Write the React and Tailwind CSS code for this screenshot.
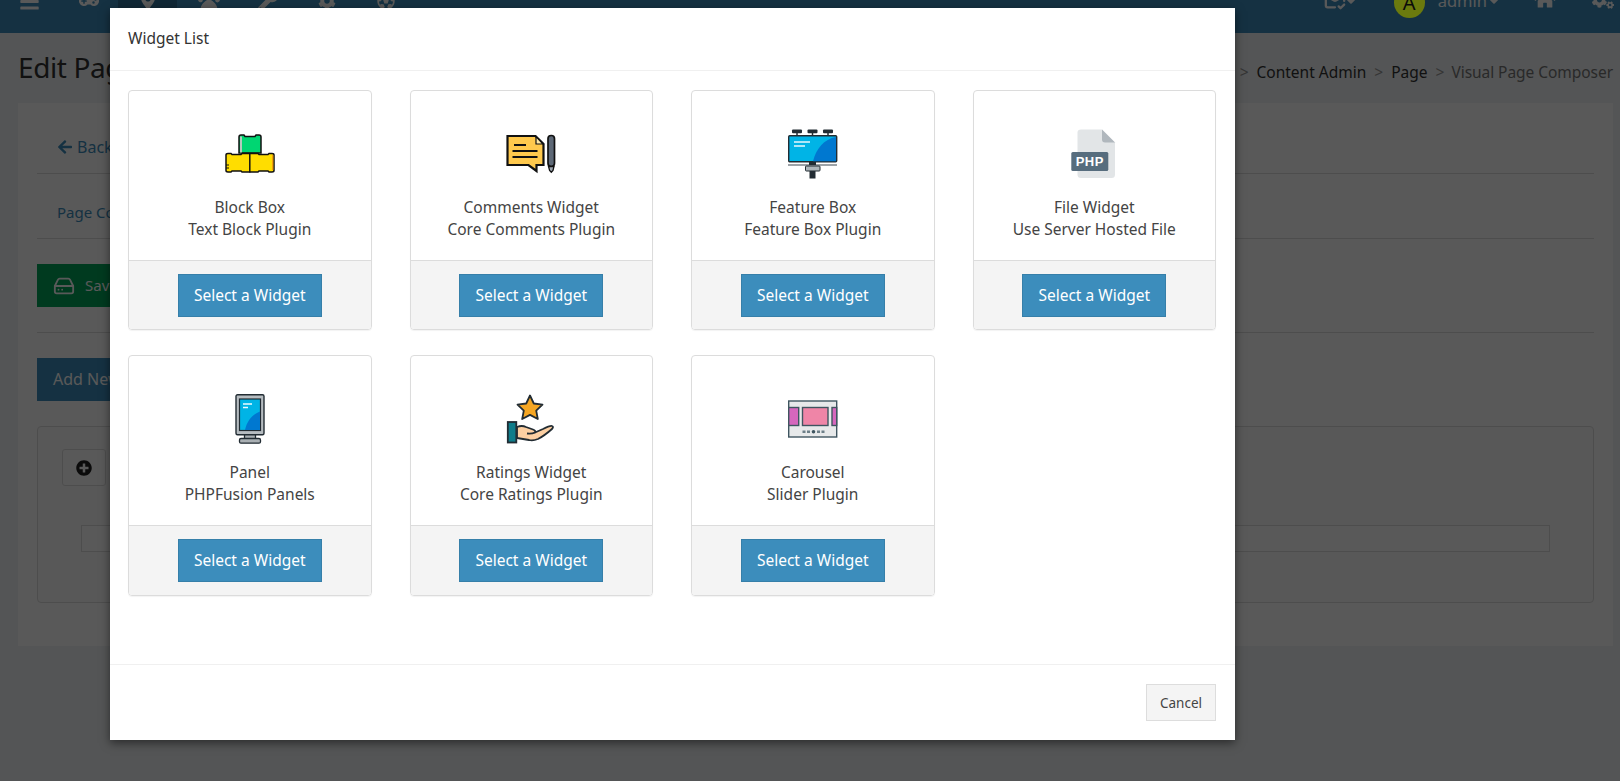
import React from "react";
import { FaBars, FaGamepad, FaMapMarkerAlt, FaPaw, FaWrench, FaCog, FaFutbol, FaHome, FaCogs, FaCaretDown, FaArrowLeft, FaPlusCircle } from "react-icons/fa";
import { MailCheck, HardDrive } from "lucide-react";

const ICON = { viewBox: "0 0 50 50", width: 50, height: 50, className: "block" };

function BlockIcon() {
  return (
    <svg {...ICON}>
      <path d="M14 24V8q0-2 2-2h3l1 1.500h10l1-1.500h3q2 0 2 2v16z" fill="#00d672" stroke="#111" strokeWidth="1.500" />
      <rect x="15" y="7.500" width="2" height="16" fill="#b5c9bd" />
      <path d="M1 26q0-1.500 2-1.500h3l1 1h9l1-1h16l1 1h9l1-1h3q2 0 2 1.500v15.500q0 1.500-2 1.500h-3l-1-1h-9l-1 1H17l-1-1H7l-1 1H3q-2 0-2-1.500z" fill="#ffdd00" stroke="#111" strokeWidth="1.500" />
      <path d="M24.800 24.500v19" stroke="#111" strokeWidth="1.500" />
      <path d="M1 36h3M1 39h3" stroke="#111" strokeWidth="1" />
      <rect x="47" y="26" width="1.300" height="15" fill="#f59e0b" />
    </svg>
  );
}

function CommentsIcon() {
  return (
    <svg {...ICON}>
      <path d="M1.500 7h28l8 8v21h-7v6l-8-6H1.500z" fill="#ffc94d" stroke="#111" strokeWidth="2.200" strokeLinejoin="miter" />
      <path d="M30 7.500v7.500h7z" fill="#ffe9a8" stroke="#111" strokeWidth="1.200" />
      <path d="M8 16h12M6.500 22h25M6.500 28h25" stroke="#111" strokeWidth="1.800" />
      <rect x="42" y="6.500" width="6.500" height="31" rx="3.200" fill="#5d6876" stroke="#111" strokeWidth="1.700" />
      <path d="M42.500 37.500h5.500l-1 4-1.700 1.800-1.700-1.800z" fill="#9aa3ad" stroke="#111" strokeWidth="1.300" />
    </svg>
  );
}

function FeatureIcon() {
  return (
    <svg {...ICON}>
      <rect x="4" y="0.500" width="10" height="3.800" rx="1" fill="#222c33" />
      <rect x="19.500" y="0.500" width="10" height="3.800" rx="1" fill="#222c33" />
      <rect x="35" y="0.500" width="10" height="3.800" rx="1" fill="#222c33" />
      <path d="M9 4v3M24.500 4v3M40 4v3" stroke="#222c33" strokeWidth="1.500" />
      <rect x="0.700" y="6.800" width="48" height="26" rx="1" fill="#00b4e6" stroke="#222c33" strokeWidth="1.400" />
      <path d="M25 32.200C28 20 36 10 48 8v24.200z" fill="#0078d0" />
      <path d="M6 13h16M6 17h11" stroke="#e8f7fd" strokeWidth="1.400" />
      <path d="M0 36h49" stroke="#3b4750" strokeWidth="1" />
      <rect x="21" y="33" width="7" height="3" fill="#222c33" />
      <rect x="17.500" y="37" width="14.500" height="5" rx="0.800" fill="#aeb5ba" stroke="#222c33" strokeWidth="1" />
      <rect x="21.500" y="42" width="6" height="7.500" fill="#222c33" />
    </svg>
  );
}

function FileIcon() {
  return (
    <svg {...ICON}>
      <path d="M12 0.500h21l13 13v32q0 3.500-3.500 3.500H12q-3.500 0-3.500-3.500v-42Q8.500 0.500 12 0.500z" fill="#e2e5e7" />
      <path d="M33 0.500v10q0 3 3 3h10z" fill="#b0b7bd" />
      <rect x="2.300" y="23" width="37" height="19" rx="1.500" fill="#576d7e" />
      <text x="20.800" y="37" textAnchor="middle" fill="#fff" letterSpacing="0.500" fontFamily="'Liberation Sans', sans-serif" fontWeight="700" fontSize="13">PHP</text>
    </svg>
  );
}

function PanelIcon() {
  return (
    <svg {...ICON}>
      <rect x="19.500" y="40" width="11" height="6" fill="#a9afb3" stroke="#222c33" strokeWidth="1.300" />
      <rect x="14.500" y="44.500" width="21" height="4.700" rx="1.500" fill="#a9afb3" stroke="#222c33" strokeWidth="1.300" />
      <rect x="11" y="0.700" width="28" height="40" rx="1.500" fill="#b6bcc0" stroke="#222c33" strokeWidth="1.400" />
      <rect x="14.500" y="5" width="21" height="31.500" fill="#00b4e6" stroke="#222c33" strokeWidth="1.200" />
      <path d="M20 36C22 26 28 20 35 17.500V36z" fill="#0078d0" />
      <path d="M18 10h9M18 13.500h5" stroke="#eefaff" strokeWidth="1.300" />
    </svg>
  );
}

function RatingsIcon() {
  return (
    <svg {...ICON}>
      <path d="M24 1.500l3.800 8 8.700 1.200-6.300 6 1.600 8.300-7.800-4.100-7.800 4.100 1.600-8.300-6.300-6 8.700-1.200z" fill="#f5a623" stroke="#222c33" strokeWidth="1.800" strokeLinejoin="round" />
      <path d="M11 33q5-2 9 0l7 2.500q3 1 2 3l8-3.500q7-3.500 9-3t0 3q-8 7-14 10-5 2-9 1l-12-2z" fill="#fccfa2" stroke="#222c33" strokeWidth="1.800" strokeLinejoin="round" />
      <path d="M29 38.500q-3 1.500-8 1" fill="none" stroke="#222c33" strokeWidth="1.800" />
      <rect x="1.800" y="28" width="8.500" height="20.500" fill="#0f7c8a" stroke="#222c33" strokeWidth="1.800" />
    </svg>
  );
}

function CarouselIcon() {
  return (
    <svg {...ICON}>
      <rect x="0.700" y="7" width="48" height="36" fill="#e7e9ea" stroke="#3f5560" strokeWidth="1.400" />
      <rect x="14.500" y="13.500" width="25.500" height="18" fill="#ef85a7" stroke="#3f5560" strokeWidth="1.400" />
      <rect x="0.700" y="13.500" width="10" height="18" fill="#d667bd" stroke="#3f5560" strokeWidth="1.400" />
      <rect x="44" y="13.500" width="4.700" height="18" fill="#d667bd" stroke="#3f5560" strokeWidth="1.400" />
      <rect x="14.500" y="36.500" width="3" height="2.500" fill="#6d7f88" />
      <rect x="19" y="36.500" width="3" height="2.500" fill="#6d7f88" />
      <circle cx="25.500" cy="37.700" r="1.800" fill="#3f5560" />
      <rect x="29" y="36.500" width="3" height="2.500" fill="#6d7f88" />
      <rect x="33.500" y="36.500" width="3" height="2.500" fill="#6d7f88" />
    </svg>
  );
}

const widgets = [
  { Icon: BlockIcon, title: "Block Box", sub: "Text Block Plugin" },
  { Icon: CommentsIcon, title: "Comments Widget", sub: "Core Comments Plugin" },
  { Icon: FeatureIcon, title: "Feature Box", sub: "Feature Box Plugin" },
  { Icon: FileIcon, title: "File Widget", sub: "Use Server Hosted File" },
  { Icon: PanelIcon, title: "Panel", sub: "PHPFusion Panels" },
  { Icon: RatingsIcon, title: "Ratings Widget", sub: "Core Ratings Plugin" },
  { Icon: CarouselIcon, title: "Carousel", sub: "Slider Plugin" },
];

function WidgetCard({ Icon, title, sub }) {
  return (
    <div className="flex flex-col overflow-hidden rounded-[4px] border border-[#dcdcdc] shadow-[0_1px_1px_rgba(0,0,0,0.05)]">
      <div className="flex h-[169px] flex-col items-center pt-[38px] text-center">
        <Icon />
        <div className="mt-[17px] text-[15.500px] leading-[22px] text-[#444]">
          <div>{title}</div>
          <div>{sub}</div>
        </div>
      </div>
      <div className="flex flex-1 justify-center border-t border-[#dcdcdc] bg-[#f4f4f4] pt-[13px]">
        <button className="h-[43px] w-[144px] border border-[#367fa9] bg-[#3c8dbc] text-[15.500px] text-white">
          Select a Widget
        </button>
      </div>
    </div>
  );
}

function Page() {
  return (
    <div className="h-[781px] overflow-hidden bg-[#f0f3f5] font-['Noto_Sans',sans-serif] text-[#333]">
      <div className="relative flex h-[33px] items-start overflow-hidden bg-[#3c8dbc] text-white">
        <div className="flex -mt-[11px] h-[24px] items-center">
          <div className="ml-[20px] flex w-[19px] justify-center text-[21px]"><FaBars /></div>
          <div className="ml-[40px] flex w-[20px] justify-center text-[20px]"><FaGamepad /></div>
          <div className="ml-[19px] flex h-[24px] w-[59px] items-center justify-center bg-[#2f7199] text-[18px]"><FaMapMarkerAlt /></div>
          <div className="ml-[20px] flex w-[23px] justify-center text-[22px]"><FaPaw /></div>
          <div className="ml-[38px] flex w-[20px] justify-center text-[20px]"><FaWrench /></div>
          <div className="ml-[40px] flex w-[18px] justify-center text-[18px]"><FaCog /></div>
          <div className="ml-[41px] flex w-[18px] justify-center text-[18px]"><FaFutbol /></div>
        </div>
        <div className="ml-auto flex items-start">
          <div className="flex items-start">
            <MailCheck size={22} strokeWidth={2.500} className="-mt-[11px]" />
            <FaCaretDown className="-ml-[2px] -mt-[6px] text-[14px]" />
          </div>
          <div className="relative z-10 ml-[36px] -mt-[13px] flex h-[31px] w-[31px] items-center justify-center rounded-full bg-[#6b7a0e] text-[20px] text-[#0a0a0a]">A</div>
          <div className="ml-[13px] -mt-[11px] flex h-[24px] items-center text-[16.500px]">admin<FaCaretDown className="text-[14px]" /></div>
          <FaHome className="ml-[33px] -mt-[12px] text-[22px]" />
          <FaCogs className="ml-[36px] mr-[6px] -mt-[11px] text-[22px]" />
        </div>
      </div>
      <div className="flex h-[70px] items-center justify-between pl-[18px] pr-[7px]">
        <div className="mb-[3px] text-[28px] tracking-[-0.400px]">Edit Page</div>
        <div className="mt-[9px] flex gap-[8px] text-[15.500px]">
          <span>Dashboard</span><span className="text-[#999]">&gt;</span>
          <span>Content Admin</span><span className="text-[#999]">&gt;</span>
          <span>Page</span><span className="text-[#999]">&gt;</span>
          <span className="-ml-[1px] tracking-[-0.050px] text-[#777]">Visual Page Composer</span>
        </div>
      </div>
      <div className="ml-[18px] mr-[7px] h-[543px] bg-white px-[19px]">
        <div className="flex h-[71px] items-center gap-1 border-b border-[#ddd] pl-[20px] pt-[17px] text-[16px] text-[#3c8dbc]">
          <FaArrowLeft />Back
        </div>
        <div className="flex h-[65px] items-center border-b border-[#ddd] pl-[20px] pt-[12px] text-[15px] text-[#3c8dbc]">Page Composer</div>
        <div className="mt-[25px] flex h-[43px] w-[180px] items-center gap-[10px] bg-[#00a65a] pl-[16px] text-[15px] text-white">
          <HardDrive size={22} />Save
        </div>
        <div className="mt-[25px] border-t border-[#ddd]" />
        <div className="mt-[25px] flex h-[43px] w-[180px] items-center bg-[#3c8dbc] pb-[2px] pl-[16px] text-[16px] text-white">Add New Row</div>
        <div className="mt-[25px] h-[177px] rounded-[4px] border border-[#ddd] bg-[#fbfbfb] px-[43px] pt-[22px]">
          <div className="-ml-[19px] flex h-[37px] w-[44px] items-center justify-center rounded-[3px] border border-[#ddd] bg-white text-[16px] text-[#222]">
            <FaPlusCircle />
          </div>
          <div className="mt-[39px] h-[27px] border border-[#ddd] bg-white" />
        </div>
      </div>
    </div>
  );
}

export default function App() {
  return (
    <div className="relative h-[781px] overflow-hidden">
      <Page />
      <div className="absolute inset-0 bg-black/65">
        <div className="ml-[110px] mt-[8px] flex h-[732px] w-[1125px] flex-col bg-white font-['Noto_Sans',sans-serif] shadow-[0_3px_9px_rgba(0,0,0,0.5)]">
          <div className="flex h-[63px] items-center border-b border-[#f0f0f0] pl-[18px] pb-[1px] text-[15.500px] text-[#333]">
            Widget List
          </div>
          <div className="grid flex-1 grid-cols-4 grid-rows-[240px_241px] content-start gap-x-[38px] gap-y-[25px] pl-[18px] pr-[19px] pt-[19px]">
            {widgets.map((w) => (
              <WidgetCard key={w.title} {...w} />
            ))}
          </div>
          <div className="flex h-[76px] items-center justify-end border-t border-[#f0f0f0] pr-[19px]">
            <button className="h-[37px] w-[70px] border border-[#ddd] bg-[#f4f4f4] pt-[1px] text-[13.500px] text-[#444]">Cancel</button>
          </div>
        </div>
      </div>
    </div>
  );
}
